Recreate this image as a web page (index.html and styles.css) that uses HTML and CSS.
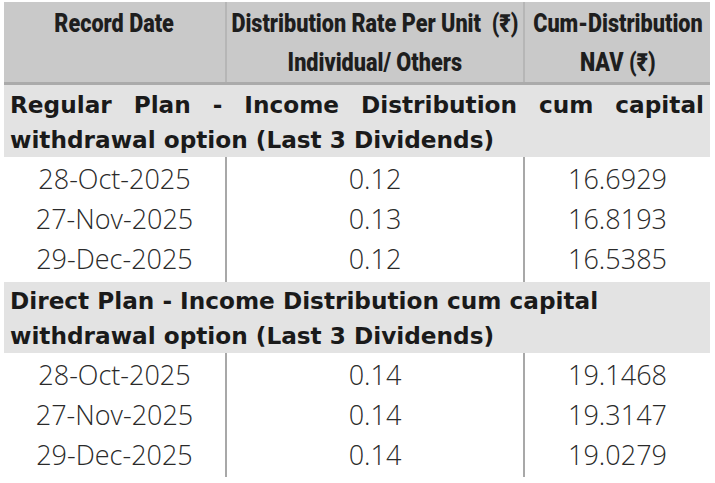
FILE: index.html
```html
<!DOCTYPE html>
<html>
<head>
<meta charset="utf-8">
<link rel="stylesheet" href="styles.css">
</head>
<body>
<table class="dist">
  <colgroup>
    <col class="c1"><col class="c2"><col class="c3">
  </colgroup>
  <thead>
    <tr class="head">
      <th><div class="hc"><span class="ln">Record Date</span></div></th>
      <th><div class="hc"><span class="ln">Distribution Rate Per Unit&nbsp; (₹)</span><span class="ln">Individual/ Others</span></div></th>
      <th><div class="hc"><span class="ln">Cum-Distribution</span><span class="ln">NAV (₹)</span></div></th>
    </tr>
  </thead>
  <tbody>
    <tr class="section">
      <td colspan="3" class="justify">Regular Plan - Income Distribution cum capital withdrawal option (Last 3 Dividends)</td>
    </tr>
    <tr class="data first"><td>28-Oct-2025</td><td>0.12</td><td>16.6929</td></tr>
    <tr class="data"><td>27-Nov-2025</td><td>0.13</td><td>16.8193</td></tr>
    <tr class="data last"><td>29-Dec-2025</td><td>0.12</td><td>16.5385</td></tr>
    <tr class="section second">
      <td colspan="3">Direct Plan - Income Distribution cum capital<br>withdrawal option (Last 3 Dividends)</td>
    </tr>
    <tr class="data first"><td>28-Oct-2025</td><td>0.14</td><td>19.1468</td></tr>
    <tr class="data"><td>27-Nov-2025</td><td>0.14</td><td>19.3147</td></tr>
    <tr class="data last"><td>29-Dec-2025</td><td>0.14</td><td>19.0279</td></tr>
  </tbody>
</table>
</body>
</html>
```
FILE: styles.css
```css
html, body {
  margin: 0;
  padding: 0;
  background: #ffffff;
}
body {
  padding: 2px 5px 0 4px;
  color: #222222;
}
.dist {
  width: 706px;
  border-collapse: collapse;
  table-layout: fixed;
}
.c1 { width: 222px; }
.c2 { width: 298px; }
.c3 { width: 186px; }

.head th {
  background: #c9c9c9;
  font-family: Roboto, "Liberation Sans", sans-serif;
  font-weight: 900;
  font-size: 25px;
  line-height: 39px;
  height: 78px;
  padding: 2px 0 0 0;
  vertical-align: top;
  text-align: center;
  color: #1e1e1e;
  border-bottom: 3px solid #ababab;
  border-left: 2px solid #b6b6b6;
}
.head th:first-child { border-left: none; }
.hc {
  display: flex;
  flex-direction: column;
  align-items: center;
}
.ln {
  display: block;
  white-space: nowrap;
  transform: scaleX(0.865);
  transform-origin: center;
}

.section td {
  background: #e3e3e3;
  font-family: "DejaVu Sans", "Noto Sans", sans-serif;
  font-weight: bold;
  font-size: 23.2px;
  line-height: 35px;
  padding: 2px 6px 0 6px;
  color: #1a1a1a;
  border-top: 1px solid #ffffff;
}
.section.second td { line-height: 35px; padding-top: 1px; }
.section td.justify {
  text-align: justify;
}

.data td {
  font-family: "Open Sans", "Noto Sans", sans-serif;
  font-weight: 300;
  font-size: 27px;
  line-height: 40px;
  height: 40px;
  padding: 0;
  text-align: center;
  color: #2a2a2a;
  border-left: 2px solid #a8a8a8;
}
.data td:first-child { border-left: none; }
.data.first td { padding-top: 2px; }
.data.last td { padding-bottom: 2px; }
```
